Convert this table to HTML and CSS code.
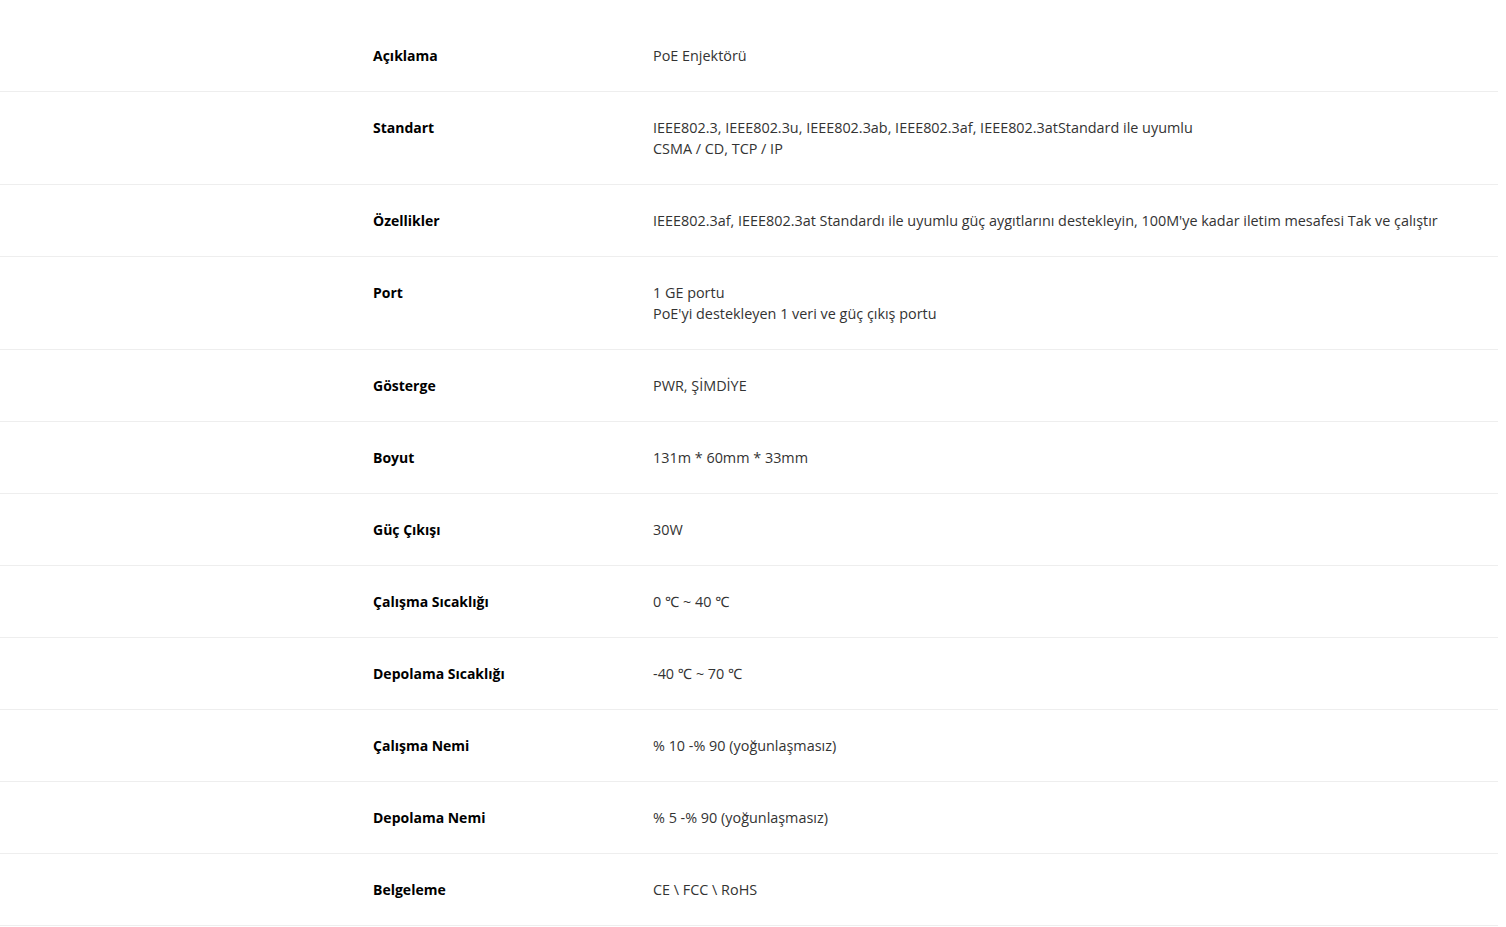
FILE: index.html
```html
<!DOCTYPE html>
<html lang="tr">
<head>
<meta charset="utf-8">
<title>Özellikler</title>
<link rel="stylesheet" href="styles.css">
</head>
<body>
<div class="specs">
  <div class="row"><div class="label">Açıklama</div><div class="value">PoE Enjektörü</div></div>
  <div class="row"><div class="label">Standart</div><div class="value">IEEE802.3, IEEE802.3u, IEEE802.3ab, IEEE802.3af, IEEE802.3atStandard ile uyumlu<br>CSMA / CD, TCP / IP</div></div>
  <div class="row"><div class="label">Özellikler</div><div class="value">IEEE802.3af, IEEE802.3at Standardı ile uyumlu güç aygıtlarını destekleyin, 100M'ye kadar iletim mesafesi Tak ve çalıştır</div></div>
  <div class="row"><div class="label">Port</div><div class="value">1 GE portu<br>PoE'yi destekleyen 1 veri ve güç çıkış portu</div></div>
  <div class="row"><div class="label">Gösterge</div><div class="value">PWR, ŞİMDİYE</div></div>
  <div class="row"><div class="label">Boyut</div><div class="value">131m * 60mm * 33mm</div></div>
  <div class="row"><div class="label">Güç Çıkışı</div><div class="value">30W</div></div>
  <div class="row"><div class="label">Çalışma Sıcaklığı</div><div class="value">0 ℃ ~ 40 ℃</div></div>
  <div class="row"><div class="label">Depolama Sıcaklığı</div><div class="value">-40 ℃ ~ 70 ℃</div></div>
  <div class="row"><div class="label">Çalışma Nemi</div><div class="value">% 10 -% 90 (yoğunlaşmasız)</div></div>
  <div class="row"><div class="label">Depolama Nemi</div><div class="value">% 5 -% 90 (yoğunlaşmasız)</div></div>
  <div class="row"><div class="label">Belgeleme</div><div class="value">CE \ FCC \ RoHS</div></div>
</div>
</body>
</html>
```

FILE: styles.css
```css
html, body {
  margin: 0;
  padding: 0;
  background: #fff;
}
body {
  font-family: "Open Sans", "Noto Sans", sans-serif;
  font-size: 14px;
  line-height: 21px;
}
.specs {
  width: 1498px;
  padding-top: 20px;
}
.row {
  display: flex;
  padding: 25px 0 25px 373px;
  border-bottom: 1px solid #eeeeee;
}
.label {
  width: 280px;
  flex-shrink: 0;
  font-weight: 700;
  color: #000;
}
.value {
  font-size: 14.4px;
  color: #333;
}
```
